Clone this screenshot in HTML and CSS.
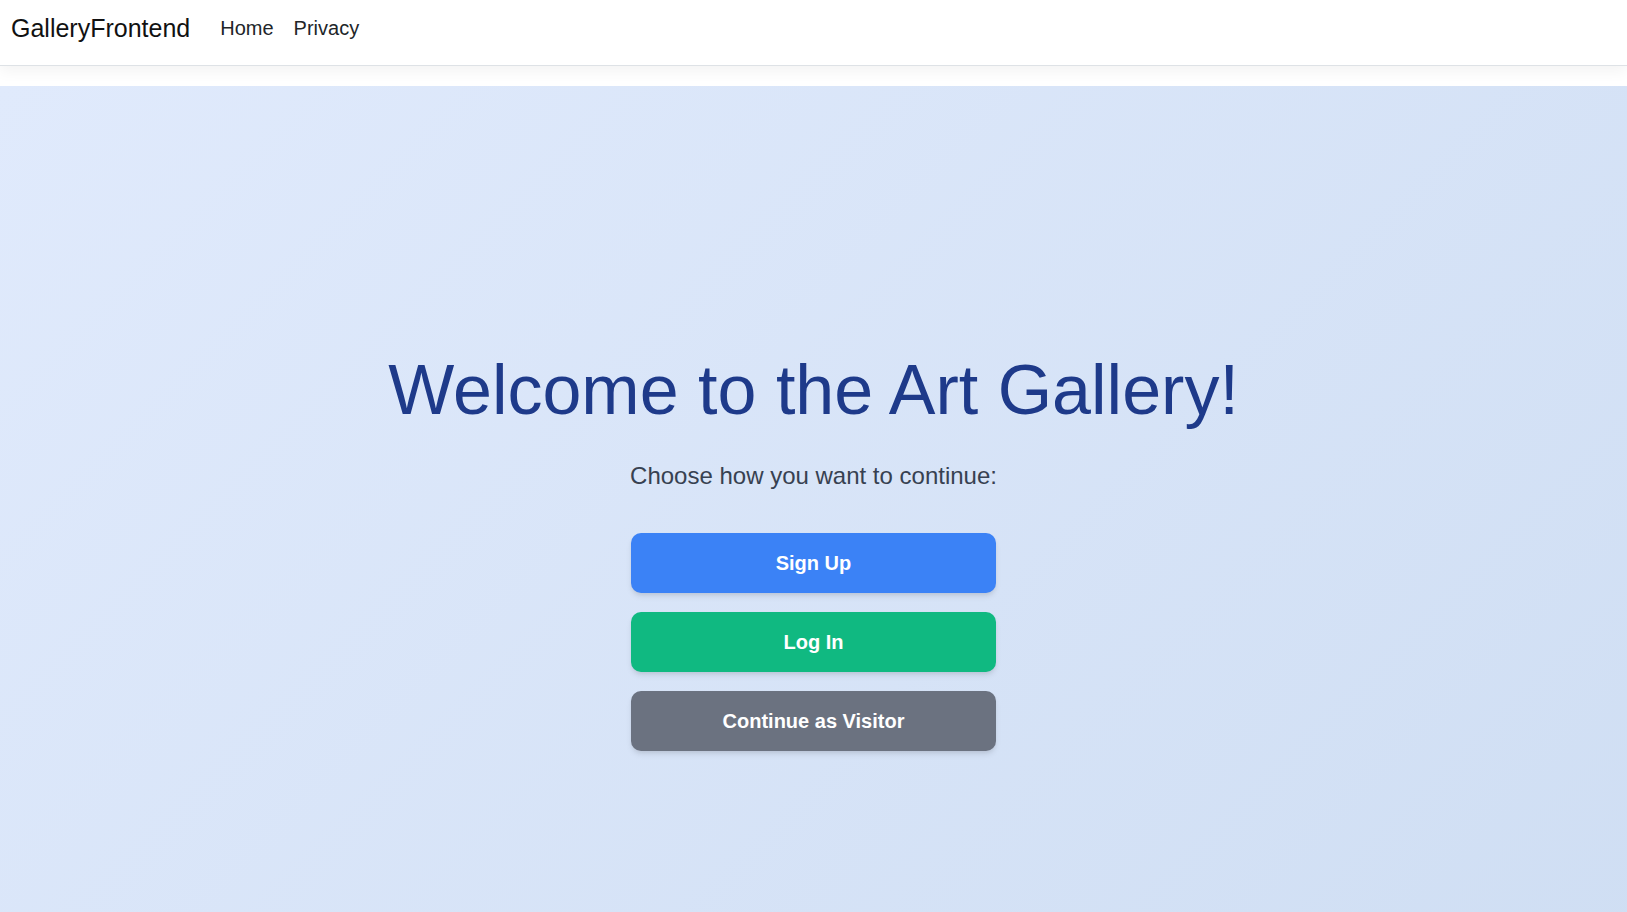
FILE: index.html
```html
<!DOCTYPE html>
<html lang="en">
<head>
<meta charset="utf-8">
<title>GalleryFrontend</title>
<link rel="stylesheet" href="styles.css">
</head>
<body>
<header class="navbar">
  <a class="brand" href="#">GalleryFrontend</a>
  <nav class="nav">
    <a class="nav-link" href="#">Home</a>
    <a class="nav-link" href="#">Privacy</a>
  </nav>
</header>
<main class="hero">
  <h1 class="title">Welcome to the Art Gallery!</h1>
  <p class="subtitle">Choose how you want to continue:</p>
  <div class="actions">
    <a class="btn btn-blue" href="#">Sign Up</a>
    <a class="btn btn-green" href="#">Log In</a>
    <a class="btn btn-gray" href="#">Continue as Visitor</a>
  </div>
</main>
</body>
</html>
```
FILE: styles.css
```css
* { box-sizing: border-box; }
html, body { margin: 0; padding: 0; }
body {
  font-family: "Liberation Sans", Arial, sans-serif;
  background: #ffffff;
  color: #212529;
}
.navbar {
  display: flex;
  align-items: flex-start;
  height: 66px;
  padding: 10px 11px 0;
  background: #ffffff;
  border-bottom: 1px solid #dee2e6;
  box-shadow: 0 5px 14px rgba(0, 0, 0, 0.05);
  margin-bottom: 20px;
  position: relative;
  z-index: 1;
}
.brand {
  font-size: 25px;
  line-height: 1.5;
  color: #111;
  text-decoration: none;
  margin-right: 20px;
}
.nav { display: flex; margin-top: 2.5px; }
.nav-link {
  font-size: 20px;
  line-height: 1.5;
  padding: 0 10px;
  color: #212529;
  text-decoration: none;
}
.hero {
  min-height: 100vh;
  padding-top: 14px;
  display: flex;
  flex-direction: column;
  align-items: center;
  justify-content: center;
  background: linear-gradient(135deg, #e0eafc 0%, #cfdef3 100%);
  text-align: center;
}
.title {
  margin: 0 0 26px;
  font-size: 70px;
  line-height: 84px;
  font-weight: 400;
  color: #1e3a8a;
}
.subtitle {
  margin: 0 0 39px;
  font-size: 24px;
  line-height: 36px;
  color: #374151;
}
.actions {
  display: flex;
  flex-direction: column;
  gap: 19px;
  width: 365px;
}
.btn {
  display: block;
  height: 60px;
  padding: 15px 0;
  font-size: 20px;
  line-height: 30px;
  font-weight: 700;
  color: #ffffff;
  text-decoration: none;
  border-radius: 10px;
  box-shadow: 0 4px 6px -1px rgba(0, 0, 0, 0.1), 0 2px 4px -1px rgba(0, 0, 0, 0.06);
}
.btn-blue { background: #3b82f6; }
.btn-green { background: #10b981; }
.btn-gray { background: #6b7280; }
```
